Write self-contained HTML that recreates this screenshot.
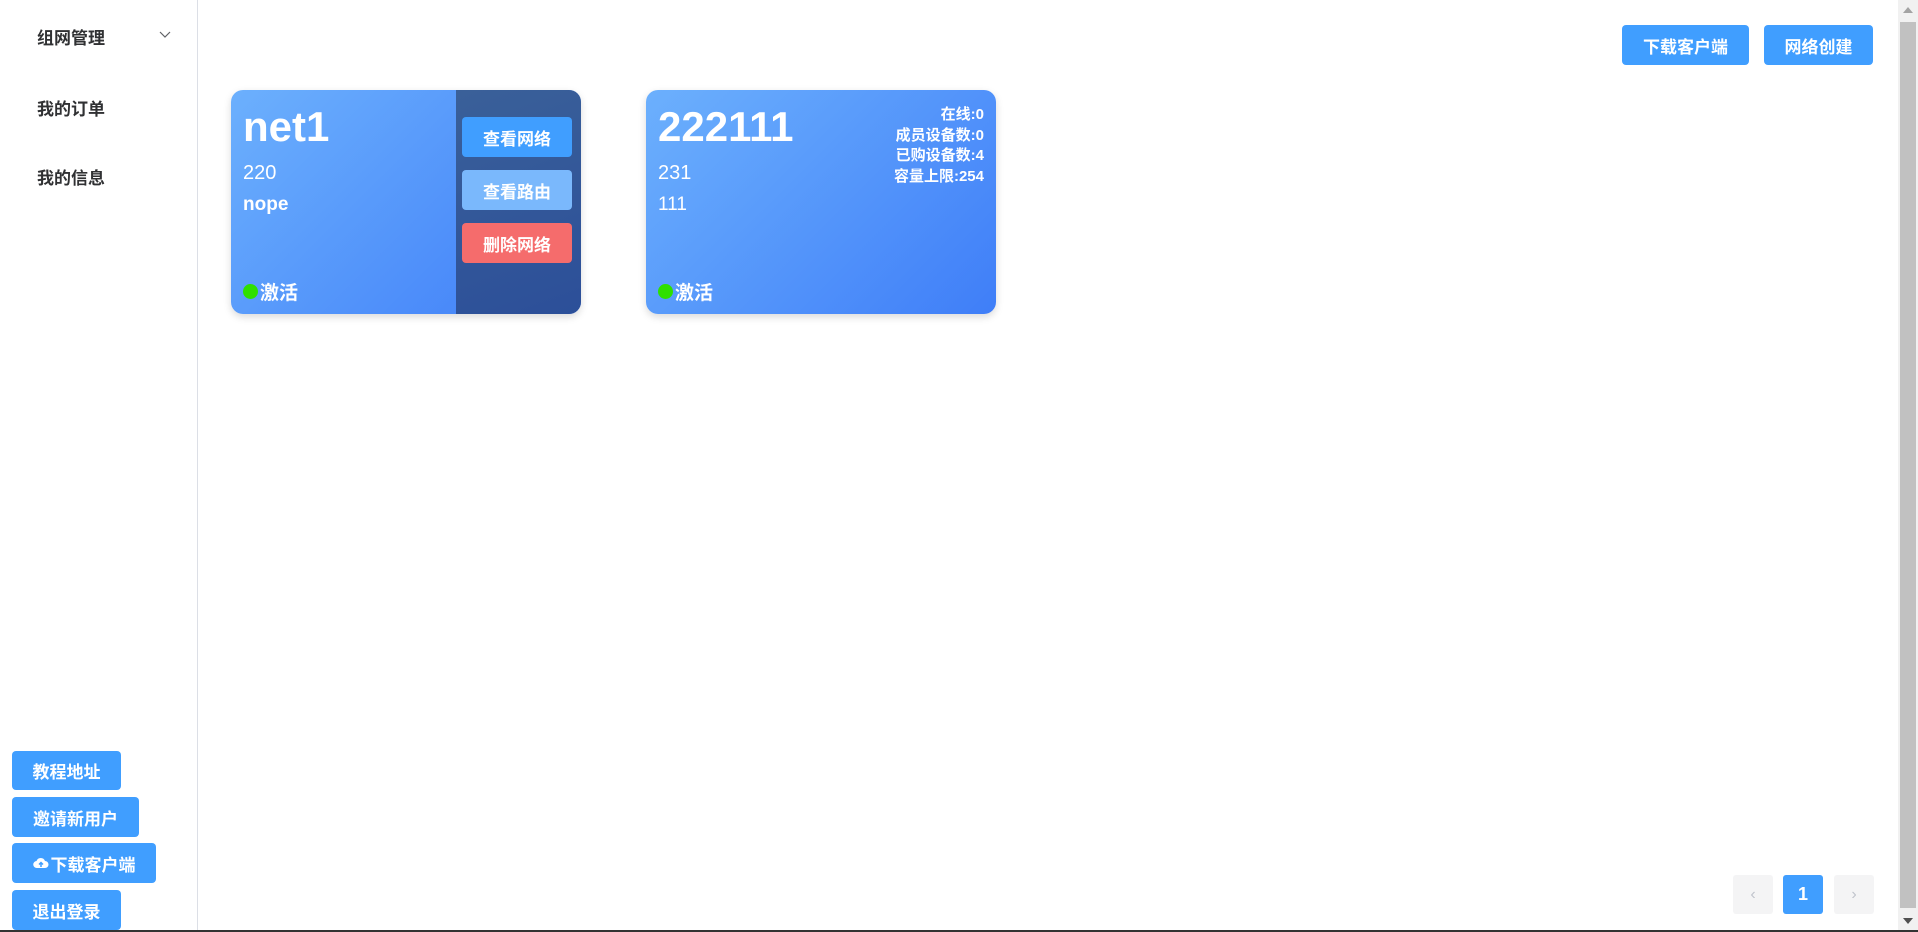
<!DOCTYPE html>
<html><head><meta charset="utf-8"><style>
*{box-sizing:border-box;margin:0;padding:0}
body{width:1918px;height:932px;overflow:hidden;background:#fff;font-family:"Liberation Sans","Noto Sans CJK SC",sans-serif;position:relative}
.side{position:absolute;left:0;top:0;width:198px;height:930px;border-right:1px solid #dcdfe6}
.mi{position:absolute;left:37px;font-size:17px;font-weight:bold;color:#303133}
.btn{position:absolute;background:#409eff;color:#fff;border-radius:4px;font-size:17px;font-weight:bold;display:flex;align-items:center;justify-content:center}
.card{position:absolute;top:90px;width:350px;height:224px;border-radius:12px;background:linear-gradient(135deg,#6cb0fd,#3f7ef8);box-shadow:0 3px 8px rgba(0,0,0,.15);overflow:hidden;color:#fff}
.t{position:absolute;left:12px;top:13px;font-size:42px;font-weight:bold}
.l1{position:absolute;left:12px;top:72px;font-size:20px}
.l2{position:absolute;left:12px;top:104px;font-size:19px}
.act{position:absolute;left:12px;font-size:19px;font-weight:bold;display:flex;align-items:center}
.dot{width:15px;height:15px;border-radius:50%;background:#2fe000;display:inline-block;margin-right:2px}
.panel{position:absolute;left:225px;top:0;width:125px;height:224px;background:linear-gradient(160deg,#3a6099,#2c4f99)}
.pb{position:absolute;left:6px;width:110px;height:40px;border-radius:4px;color:#fff;font-size:17px;font-weight:bold;display:flex;align-items:center;justify-content:center}
.info{position:absolute;right:12px;top:15px;text-align:right;font-size:15px;font-weight:bold;line-height:20.5px}
.pg{position:absolute;top:875px;width:40px;height:39px;border-radius:3px;background:#f4f4f5;color:#c0c4cc;display:flex;align-items:center;justify-content:center;font-size:16px}
</style></head><body>
<div class="side">
<div class="mi" style="top:24px">组网管理</div>
<svg style="position:absolute;left:159px;top:31px" width="12" height="8" viewBox="0 0 12 8"><path d="M1 1l5 5 5-5" fill="none" stroke="#606266" stroke-width="1.2"/></svg>
<div class="mi" style="top:95px">我的订单</div>
<div class="mi" style="top:164px">我的信息</div>
<div class="btn" style="left:12px;top:751px;width:109px;height:39px">教程地址</div>
<div class="btn" style="left:12px;top:797px;width:127px;height:40px">邀请新用户</div>
<div class="btn" style="left:12px;top:843px;width:144px;height:40px"><svg width="16" height="12" viewBox="0 0 16 12" style="margin-right:2px"><path d="M4 11a3.5 3.5 0 0 1-.5-7A4.5 4.5 0 0 1 12 4a3.5 3.5 0 0 1 0 7z" fill="#fff"/><path d="M8 10V6M6 7.5L8 5.5 10 7.5" stroke="#409eff" stroke-width="1.5" fill="none"/></svg>下载客户端</div>
<div class="btn" style="left:12px;top:890px;width:109px;height:40px">退出登录</div>
</div>
<div class="btn" style="left:1622px;top:25px;width:127px;height:40px">下载客户端</div>
<div class="btn" style="left:1764px;top:25px;width:109px;height:40px">网络创建</div>

<div class="card" style="left:231px">
<div class="t">net1</div><div class="l1">220</div><div class="l2" style="font-weight:bold">nope</div>
<div class="act" style="top:188px"><span class="dot"></span>激活</div>
<div class="panel">
<div class="pb" style="top:27px;background:#409eff">查看网络</div>
<div class="pb" style="top:80px;background:#7ab8fc">查看路由</div>
<div class="pb" style="top:133px;background:#f56c6c">删除网络</div>
</div></div>

<div class="card" style="left:646px">
<div class="t">222111</div><div class="l1">231</div><div class="l2">111</div>
<div class="act" style="top:188px"><span class="dot"></span>激活</div>
<div class="info">在线:0<br>成员设备数:0<br>已购设备数:4<br>容量上限:254</div>
</div>

<div class="pg" style="left:1733px">‹</div>
<div class="pg" style="left:1783px;background:#409eff;color:#fff;font-weight:bold;font-size:18px">1</div>
<div class="pg" style="left:1834px">›</div>

<div style="position:absolute;left:1898px;top:0;width:20px;height:930px;background:#f1f1f1">
<div style="position:absolute;left:2px;top:22px;width:16px;height:886px;background:#c1c1c1"></div>
<svg style="position:absolute;left:5px;top:7px" width="10" height="6"><path d="M0 6L5 0 10 6z" fill="#a3a3a3"/></svg>
<svg style="position:absolute;left:5px;top:918px" width="10" height="6"><path d="M0 0L5 6 10 0z" fill="#505050"/></svg>
</div>
<div style="position:absolute;left:0;top:930px;width:1918px;height:2px;background:#333"></div>
</body></html>
